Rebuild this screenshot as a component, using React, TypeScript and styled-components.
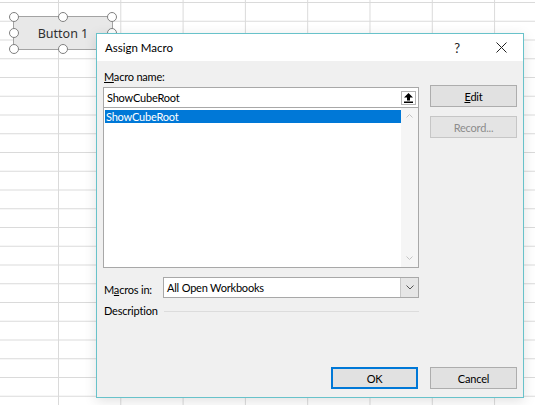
import * as React from "react";
import styled, { createGlobalStyle } from "styled-components";

const GlobalStyle = createGlobalStyle`
  html, body {
    margin: 0;
    padding: 0;
    background: #fff;
  }
  body {
    font-family: Lato, "Noto Sans", sans-serif;
    font-size: 11px;
    letter-spacing: -0.2px;
    color: #000;
  }
`;

// worksheet with gridlines
const Sheet = styled.div`
  position: relative;
  width: 535px;
  height: 405px;
  overflow: hidden;
  background-color: #fff;
  background-image: linear-gradient(to right, #dadada 1px, transparent 1px),
    linear-gradient(to bottom, #dadada 1px, transparent 1px);
  background-size: 62.3px 100%, 100% 18.75px;
  background-position: 58px 0, 0 2px;
`;

const FormButton = styled.div`
  position: absolute;
  left: 13px;
  top: 16px;
  width: 100px;
  height: 34px;
  box-sizing: border-box;
  border: 1px solid #a3a3a3;
  background: #e8e8e8;
  display: flex;
  align-items: center;
  justify-content: center;
  font-family: "Noto Sans", sans-serif;
  font-size: 12.5px;
  letter-spacing: 0;
  color: #303030;
`;

const Handle = styled.span<{ $x: number; $y: number }>`
  position: absolute;
  left: calc(${(p) => p.$x}% - 5px);
  top: calc(${(p) => p.$y}% - 5px);
  width: 8px;
  height: 8px;
  border: 1px solid #808080;
  border-radius: 50%;
  background: #fff;
`;

const Dialog = styled.div`
  position: absolute;
  left: 96px;
  top: 33px;
  width: 428px;
  height: 365px;
  box-sizing: border-box;
  border: 1px solid #68c2ca;
  background: #f0f0f0;
  display: flex;
  flex-direction: column;
  box-shadow: 0 3px 12px rgba(0, 0, 0, 0.12);
`;

const TitleBar = styled.div`
  height: 27px;
  background: #fff;
  display: flex;
  align-items: center;
  padding-left: 8px;
`;

const Title = styled.div`
  flex: 1;
  font-size: 11.5px;
  letter-spacing: 0;
`;

const TitleButton = styled.div`
  width: 44px;
  height: 27px;
  display: flex;
  align-items: center;
  justify-content: center;
  font-size: 13px;
  color: #222;
`;

const Body = styled.div`
  flex: 1;
  display: grid;
  grid-template-columns: 316px 87px;
  grid-template-rows: 1fr auto;
  column-gap: 11px;
  padding: 7px 6px 8px 6px;
`;

const MainColumn = styled.div`
  display: flex;
  flex-direction: column;
`;

const Label = styled.div`
  line-height: 16px;
  padding-left: 1px;
  padding-top: 1px;
`;

const NameField = styled.div`
  margin-top: 2px;
  height: 21px;
  box-sizing: border-box;
  border: 1px solid #a8a8a8;
  background: #fff;
  display: flex;
  align-items: center;
  padding-left: 3px;
`;

const NameText = styled.span`
  flex: 1;
`;

const CollapseButton = styled.div`
  width: 15px;
  height: 14px;
  box-sizing: border-box;
  border: 1px solid #b5b5b5;
  background: #fff;
  margin-right: 2px;
  display: flex;
  align-items: center;
  justify-content: center;
`;

const MacroList = styled.div`
  height: 160px;
  box-sizing: border-box;
  border: 1px solid #a8a8a8;
  border-top: none;
  background: #fff;
  display: flex;
`;

const ListItems = styled.div`
  flex: 1;
  padding: 2px 0 0 1px;
`;

const ListItem = styled.div<{ $selected?: boolean }>`
  height: 13px;
  line-height: 13px;
  padding-left: 1px;
  background: ${(p) => (p.$selected ? "#0078d7" : "transparent")};
  color: ${(p) => (p.$selected ? "#fff" : "#000")};
`;

const ScrollTrack = styled.div`
  width: 17px;
  background: #f5f5f5;
  display: flex;
  flex-direction: column;
  justify-content: space-between;
  align-items: center;
  padding: 6px 0 7px;
`;

const FieldRow = styled.div`
  margin-top: 9px;
  display: flex;
  align-items: center;
`;

const FieldLabel = styled.div`
  width: 60px;
  padding-left: 1px;
  box-sizing: border-box;
  padding-top: 3px;
`;

const Select = styled.div`
  flex: 1;
  height: 21px;
  box-sizing: border-box;
  border: 1px solid #a8a8a8;
  background: #fff;
  display: flex;
`;

const SelectValue = styled.div`
  flex: 1;
  padding-left: 3px;
  display: flex;
  align-items: center;
`;

const SelectArrow = styled.div`
  width: 17px;
  background: #e6e6e6;
  border-left: 1px solid #c8c8c8;
  display: flex;
  align-items: center;
  justify-content: center;
`;

const GroupRow = styled.div`
  margin-top: 5px;
  display: flex;
  align-items: center;
  gap: 6px;
  line-height: 16px;
  padding-left: 1px;
`;

const GroupLine = styled.div`
  flex: 1;
  height: 1px;
  background: #dcdcdc;
`;

const SideColumn = styled.div`
  display: flex;
  flex-direction: column;
  gap: 9px;
  padding-top: 17px;
`;

const Footer = styled.div`
  grid-column: 1 / -1;
  display: flex;
  justify-content: flex-end;
  gap: 12px;
`;

const DialogButton = styled.button<{ $default?: boolean }>`
  width: 87px;
  height: 22px;
  box-sizing: border-box;
  padding: 0;
  font: inherit;
  letter-spacing: inherit;
  color: #000;
  background: #e1e1e1;
  border: 1px solid ${(p) => (p.$default ? "#0078d7" : "#adadad")};
  box-shadow: ${(p) => (p.$default ? "inset 0 0 0 1px #0078d7" : "none")};
  &:disabled {
    color: #8c8c8c;
    background: #e4e4e4;
    border-color: #c6c6c6;
  }
`;

const Chevron = ({ down }: { down?: boolean }) => (
  <svg width="7" height="4" viewBox="0 0 7 4">
    <polyline
      points={down ? "0.5,0.5 3.5,3.5 6.5,0.5" : "0.5,3.5 3.5,0.5 6.5,3.5"}
      fill="none"
      stroke="#c4c4c4"
      strokeWidth="1"
    />
  </svg>
);

const handles: [number, number][] = [
  [0, 0],
  [50, 0],
  [100, 0],
  [0, 50],
  [100, 50],
  [0, 100],
  [50, 100],
  [100, 100],
];

export default function App() {
  return (
    <>
      <GlobalStyle />
      <Sheet>
        <FormButton>
          Button 1
          {handles.map(([x, y]) => (
            <Handle key={`${x}-${y}`} $x={x} $y={y} />
          ))}
        </FormButton>

        <Dialog>
          <TitleBar>
            <Title>Assign Macro</Title>
            <TitleButton>?</TitleButton>
            <TitleButton>
              <svg width="11" height="11" viewBox="0 0 11 11">
                <path d="M0.5 0.5 L10.5 10.5 M10.5 0.5 L0.5 10.5" stroke="#222" strokeWidth="1" />
              </svg>
            </TitleButton>
          </TitleBar>

          <Body>
            <MainColumn>
              <Label>
                <u>M</u>acro name:
              </Label>
              <NameField>
                <NameText>ShowCubeRoot</NameText>
                <CollapseButton>
                  <svg width="9" height="10" viewBox="0 0 9 10">
                    <path d="M4.5 0 L9 4.5 L6 4.5 L6 7.5 L3 7.5 L3 4.5 L0 4.5 Z" fill="#000" />
                    <rect x="0" y="8.5" width="9" height="1.5" fill="#000" />
                  </svg>
                </CollapseButton>
              </NameField>
              <MacroList>
                <ListItems>
                  <ListItem $selected>ShowCubeRoot</ListItem>
                </ListItems>
                <ScrollTrack>
                  <Chevron />
                  <Chevron down />
                </ScrollTrack>
              </MacroList>

              <FieldRow>
                <FieldLabel>
                  M<u>a</u>cros in:
                </FieldLabel>
                <Select>
                  <SelectValue>All Open Workbooks</SelectValue>
                  <SelectArrow>
                    <svg width="8" height="5" viewBox="0 0 8 5">
                      <polyline points="0.5,0.5 4,4 7.5,0.5" fill="none" stroke="#555" strokeWidth="1" />
                    </svg>
                  </SelectArrow>
                </Select>
              </FieldRow>

              <GroupRow>
                Description
                <GroupLine />
              </GroupRow>
            </MainColumn>

            <SideColumn>
              <DialogButton>
                <u>E</u>dit
              </DialogButton>
              <DialogButton disabled>Record...</DialogButton>
            </SideColumn>

            <Footer>
              <DialogButton $default>OK</DialogButton>
              <DialogButton>Cancel</DialogButton>
            </Footer>
          </Body>
        </Dialog>
      </Sheet>
    </>
  );
}
